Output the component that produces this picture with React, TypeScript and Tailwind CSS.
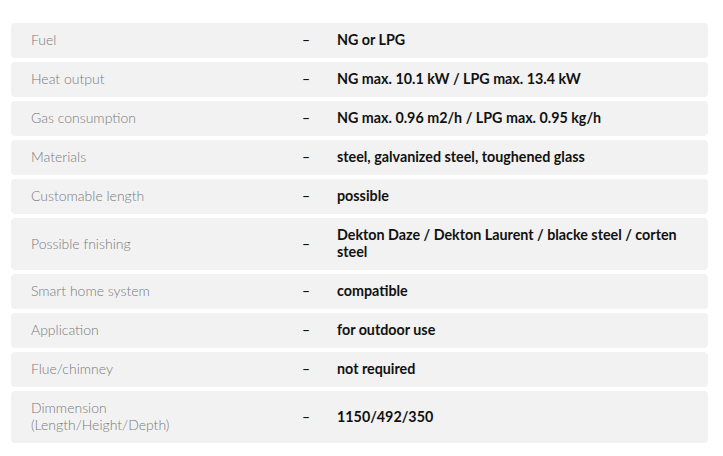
const specs: { label: string; value: string }[] = [
  { label: 'Fuel', value: 'NG or LPG' },
  { label: 'Heat output', value: 'NG max. 10.1 kW / LPG max. 13.4 kW' },
  { label: 'Gas consumption', value: 'NG max. 0.96 m2/h / LPG max. 0.95 kg/h' },
  { label: 'Materials', value: 'steel, galvanized steel, toughened glass' },
  { label: 'Customable length', value: 'possible' },
  { label: 'Possible fnishing', value: 'Dekton Daze / Dekton Laurent / blacke steel / corten steel' },
  { label: 'Smart home system', value: 'compatible' },
  { label: 'Application', value: 'for outdoor use' },
  { label: 'Flue/chimney', value: 'not required' },
  { label: 'Dimmension (Length/Height/Depth)', value: '1150/492/350' },
];

export default function App() {
  return (
    <div className="min-h-[456px] w-[723px] bg-white pl-[11px] pt-[23px] font-['Lato',sans-serif]">
      <div className="flex w-[697px] flex-col gap-[4px]">
        {specs.map((row) => (
          <div
            key={row.label}
            className="flex items-center rounded-[4px] bg-[#f2f2f2] pt-[8px] pb-[10px] pl-[20px] pr-[20px] leading-[17px]"
          >
            <div className="w-[271px] shrink-0 pr-[80px] text-[14px] font-light text-[#7a7a7a]">{row.label}</div>
            <div className="w-[35px] shrink-0 text-[14px] font-semibold text-[#111]">–</div>
            <div className="flex-1 text-[14.3px] font-bold text-[#111]">{row.value}</div>
          </div>
        ))}
      </div>
    </div>
  );
}
